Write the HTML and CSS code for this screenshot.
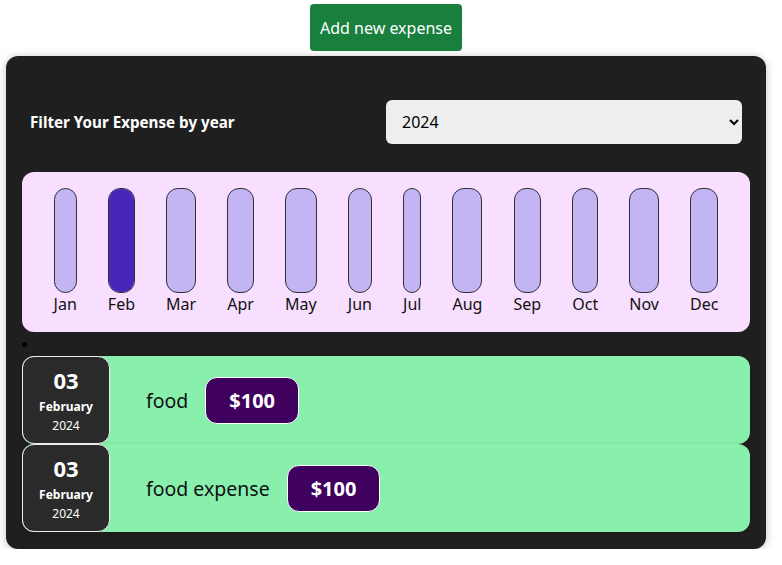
FILE: index.html
```html
<!DOCTYPE html>
<html>
<head>
<meta charset="utf-8">
<link rel="stylesheet" href="styles.css">
</head>
<body>
<main class="app">
  <div class="new-expense">
    <button class="add-btn">Add new expense</button>
  </div>
  <section class="expenses">
    <div class="filter">
      <label class="filter-label">Filter Your Expense by year</label>
      <select class="filter-select">
        <option>2024</option>
        <option>2023</option>
        <option>2022</option>
      </select>
    </div>
    <div class="chart">
      <div class="bar"><div class="bar-inner"></div><span class="bar-label">Jan</span></div>
      <div class="bar"><div class="bar-inner"><div class="bar-fill" style="height:100%"></div></div><span class="bar-label">Feb</span></div>
      <div class="bar"><div class="bar-inner"></div><span class="bar-label">Mar</span></div>
      <div class="bar"><div class="bar-inner"></div><span class="bar-label">Apr</span></div>
      <div class="bar"><div class="bar-inner"></div><span class="bar-label">May</span></div>
      <div class="bar"><div class="bar-inner"></div><span class="bar-label">Jun</span></div>
      <div class="bar"><div class="bar-inner"></div><span class="bar-label">Jul</span></div>
      <div class="bar"><div class="bar-inner"></div><span class="bar-label">Aug</span></div>
      <div class="bar"><div class="bar-inner"></div><span class="bar-label">Sep</span></div>
      <div class="bar"><div class="bar-inner"></div><span class="bar-label">Oct</span></div>
      <div class="bar"><div class="bar-inner"></div><span class="bar-label">Nov</span></div>
      <div class="bar"><div class="bar-inner"></div><span class="bar-label">Dec</span></div>
    </div>
    <ul class="dot-list"><li></li></ul>
    <ul class="expense-list">
      <li class="expense-item">
        <div class="date">
          <div class="date-day">03</div>
          <div class="date-month">February</div>
          <div class="date-year">2024</div>
        </div>
        <div class="expense-desc">
          <h2 class="expense-title">food</h2>
          <div class="expense-price">$100</div>
        </div>
      </li>
      <li class="expense-item">
        <div class="date">
          <div class="date-day">03</div>
          <div class="date-month">February</div>
          <div class="date-year">2024</div>
        </div>
        <div class="expense-desc">
          <h2 class="expense-title">food expense</h2>
          <div class="expense-price">$100</div>
        </div>
      </li>
    </ul>
  </section>
</main>
</body>
</html>
```

FILE: styles.css
```css
* { box-sizing: border-box; }
html, body { margin: 0; padding: 0; background: #ffffff; }
body { font-family: "Noto Sans", "Open Sans", sans-serif; }

.app {
  width: 782px;
  padding: 4px 16px 0 6px;
}

.new-expense {
  display: flex;
  justify-content: center;
}

.add-btn {
  font-family: inherit;
  font-size: 16px;
  color: #ffffff;
  background: #187f3d;
  border: none;
  border-radius: 4px;
  width: 152px;
  height: 47px;
  padding: 0;
}

.expenses {
  margin-top: 5px;
  background: #1f1f1f;
  border-radius: 12px;
  padding: 44px 16px 17px;
  box-shadow: 0 1px 8px rgba(0, 0, 0, 0.25);
}

.filter {
  display: flex;
  align-items: center;
  justify-content: space-between;
  padding: 0 8px;
}

.filter-label {
  color: #ffffff;
  font-weight: bold;
  font-size: 15.2px;
}

.filter-select {
  width: 356px;
  height: 44px;
  font-family: inherit;
  font-size: 16px;
  background: #eeeeee;
  color: #000;
  border: none;
  border-radius: 6px;
  padding: 0 0 0 12px;
}

.chart {
  margin-top: 28px;
  height: 160px;
  padding: 16px;
  border-radius: 12px;
  background: #f8dfff;
  display: flex;
  justify-content: space-around;
}

.bar {
  display: flex;
  flex-direction: column;
  align-items: center;
  height: 100%;
}

.bar-inner {
  flex: 1;
  width: 100%;
  border: 1px solid #313131;
  border-radius: 12px;
  background: #c3b4f3;
  overflow: hidden;
  display: flex;
  flex-direction: column;
  justify-content: flex-end;
}

.bar-fill {
  width: 100%;
  background: #4826b9;
}

.bar-label {
  font-size: 16px;
  color: #111;
  line-height: 22px;
  margin-top: 0;
  margin-bottom: 1px;
}

.dot-list {
  margin: 0;
  padding: 0;
  list-style: none;
  height: 24px;
  display: flex;
  align-items: center;
}
.dot-list li {
  width: 5px;
  height: 5px;
  border-radius: 50%;
  background: #000;
}

.expense-list {
  margin: 0;
  padding: 0;
  list-style: none;
}

.expense-item {
  display: flex;
  align-items: center;
  height: 88px;
  background: #88efad;
  border-radius: 12px;
  box-shadow: 0 1px 4px rgba(0, 0, 0, 0.15);
}

.date {
  width: 88px;
  height: 88px;
  background: #2a2a2a;
  border: 1px solid #ececec;
  border-radius: 12px;
  color: #ffffff;
  display: flex;
  flex-direction: column;
  align-items: center;
  justify-content: center;
}

.date-day {
  font-size: 22px;
  font-weight: bold;
  line-height: 28px;
}

.date-month {
  font-size: 12px;
  font-weight: bold;
  line-height: 20px;
  margin-top: 3px;
}

.date-year {
  font-size: 12px;
  line-height: 16px;
  margin-top: 1px;
}

.expense-desc {
  display: flex;
  align-items: center;
  gap: 17px;
  margin-left: 36px;
}

.expense-title {
  margin: 0;
  font-size: 19.5px;
  font-weight: normal;
  color: #111;
}

.expense-price {
  font-size: 20px;
  font-weight: bold;
  color: #ffffff;
  background: #40005d;
  border: 1px solid #ffffff;
  border-radius: 12px;
  height: 47px;
  display: flex;
  align-items: center;
  padding: 0 23px;
}
```
